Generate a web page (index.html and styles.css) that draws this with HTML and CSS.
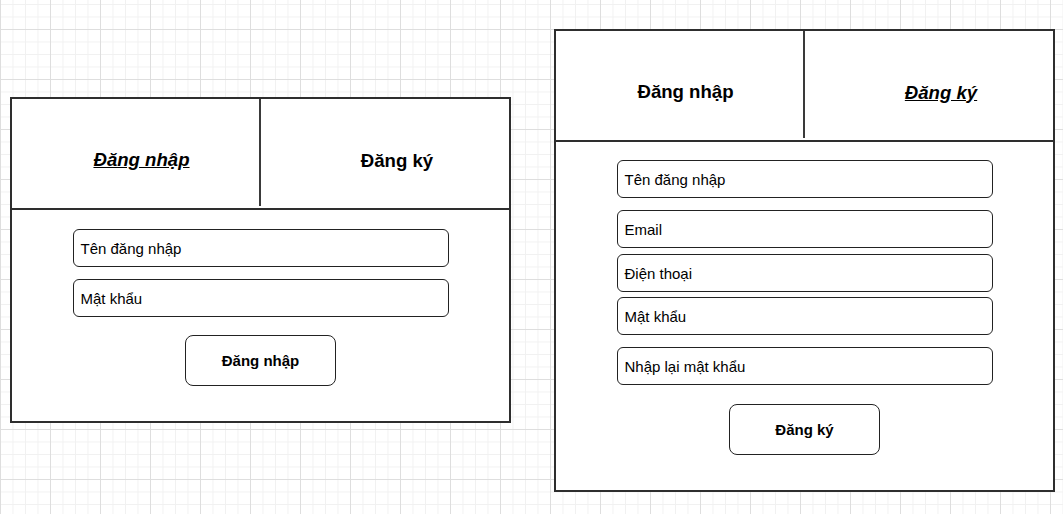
FILE: index.html
```html
<!DOCTYPE html>
<html lang="vi">
<head>
<meta charset="utf-8">
<title>Đăng nhập / Đăng ký</title>
<link rel="stylesheet" href="styles.css">
</head>
<body>
<div class="canvas">
  <section class="frame frame-login">
    <div class="tabs">
      <div class="tab tab-left active">Đăng nhập</div>
      <div class="tab tab-right">Đăng ký</div>
    </div>
    <div class="form form-login">
      <div class="field">Tên đăng nhập</div>
      <div class="field field-gap">Mật khẩu</div>
      <div class="button button-login">Đăng nhập</div>
    </div>
  </section>
  <section class="frame frame-register">
    <div class="tabs">
      <div class="tab tab-left">Đăng nhập</div>
      <div class="tab tab-right active">Đăng ký</div>
    </div>
    <div class="form form-register">
      <div class="field">Tên đăng nhập</div>
      <div class="field field-gap">Email</div>
      <div class="field field-gap-sm">Điện thoại</div>
      <div class="field field-gap-sm">Mật khẩu</div>
      <div class="field field-gap">Nhập lại mật khẩu</div>
      <div class="button button-register">Đăng ký</div>
    </div>
  </section>
</div>
</body>
</html>
```
FILE: styles.css
```css
html {
  background-color: #ffffff;
  background-image:
    linear-gradient(to right, #dedede 1px, transparent 1px),
    linear-gradient(to bottom, #dedede 1px, transparent 1px),
    linear-gradient(to right, #f1f1f1 1px, transparent 1px),
    linear-gradient(to bottom, #f1f1f1 1px, transparent 1px);
  background-size: 50px 50px, 50px 50px, 12.5px 12.5px, 12.5px 12.5px;
  background-position: 0 0, 0 29px, 0 0, 0 29px;
  min-height: 100%;
}

body {
  margin: 0;
  font-family: "Liberation Sans", Arial, sans-serif;
  color: #000;
}

.canvas {
  display: flex;
  align-items: flex-start;
  gap: 43px;
  padding-left: 10px;
}

.frame {
  box-sizing: border-box;
  width: 501px;
  background: #fff;
  border: 2px solid #2e2e2e;
  display: flex;
  flex-direction: column;
}

.frame-login {
  margin-top: 97px;
  height: 326px;
}

.frame-register {
  margin-top: 29px;
  height: 463px;
}

.tabs {
  display: flex;
  height: 111px;
  box-sizing: border-box;
  border-bottom: 2px solid #2e2e2e;
}

.tab {
  box-sizing: border-box;
  display: flex;
  align-items: center;
  justify-content: center;
  font-weight: bold;
  font-size: 18.6px;
  padding-top: 14px;
  padding-bottom: 0;
}

.tab-left {
  width: 249px;
  border-right: 2px solid #3a3a3a;
  margin-bottom: 2px;
  padding-left: 12px;
}

.tab-right {
  flex: 1;
  padding-left: 24px;
}

.tab.active {
  font-style: italic;
  text-decoration: underline;
}

.form {
  display: flex;
  flex-direction: column;
  align-items: center;
}

.form-login {
  padding-top: 19px;
}

.form-register {
  padding-top: 18px;
}

.field {
  box-sizing: border-box;
  width: 376px;
  height: 38px;
  border: 1.5px solid #222;
  border-radius: 6px;
  display: flex;
  align-items: center;
  padding-left: 7px;
  font-size: 15px;
  background: #fff;
}

.field-gap {
  margin-top: 12px;
}

.field-gap-sm {
  margin-top: 6px;
}

.form-register .field-gap-sm + .field-gap-sm {
  margin-top: 5px;
}

.button {
  box-sizing: border-box;
  width: 151px;
  height: 51px;
  border: 1.5px solid #222;
  border-radius: 8px;
  display: flex;
  align-items: center;
  justify-content: center;
  font-weight: bold;
  font-size: 15px;
  background: #fff;
}

.button-login {
  margin-top: 18px;
}

.button-register {
  margin-top: 19px;
}
```
